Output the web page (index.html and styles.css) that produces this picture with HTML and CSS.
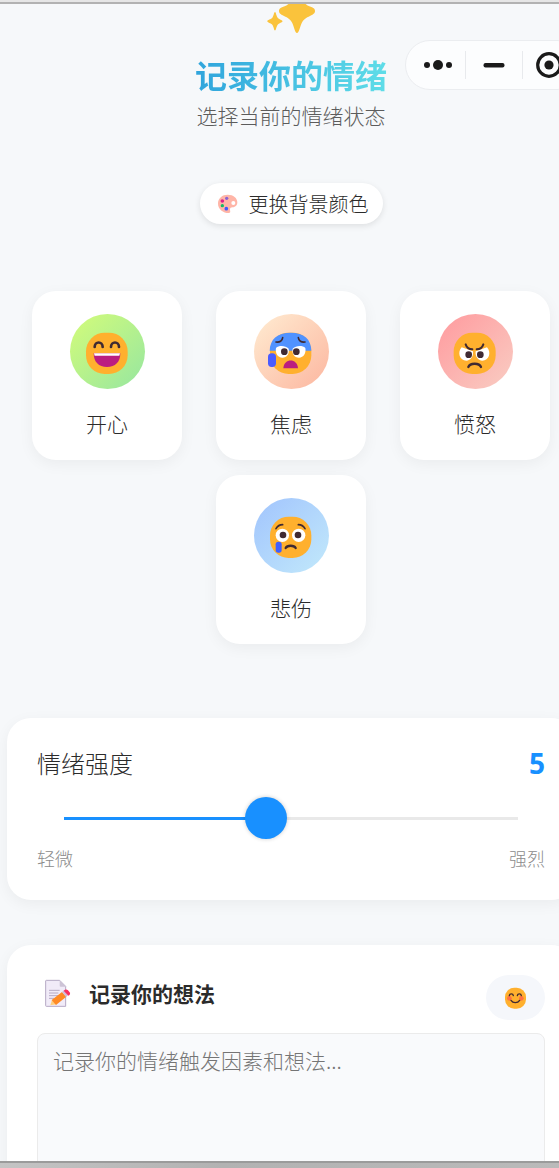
FILE: index.html
```html
<!DOCTYPE html>
<html lang="zh-CN">
<head>
<meta charset="utf-8">
<meta name="viewport" content="width=device-width, initial-scale=1">
<title>记录你的情绪</title>
<link rel="stylesheet" href="styles.css">
</head>
<body>
<div class="edge edge-top"></div>
<main class="viewport">
  <div class="page">
    <nav class="capsule" aria-label="小程序菜单">
      <button class="capsule-btn" type="button" aria-label="更多">
        <svg width="28" height="12" viewBox="0 0 28 12" fill="#1a1a1a"><circle cx="3" cy="6" r="3"/><circle cx="14" cy="6" r="5"/><circle cx="25" cy="6" r="3"/></svg>
      </button>
      <button class="capsule-btn" type="button" aria-label="最小化">
        <svg width="22" height="6" viewBox="0 0 22 6"><rect x="0.5" y="1" width="21" height="4.6" rx="2" fill="#1a1a1a"/></svg>
      </button>
      <button class="capsule-btn" type="button" aria-label="关闭">
        <svg width="26" height="26" viewBox="0 0 26 26"><circle cx="13" cy="13" r="11.3" fill="none" stroke="#1a1a1a" stroke-width="3.2"/><circle cx="13" cy="13" r="4.6" fill="#1a1a1a"/></svg>
      </button>
    </nav>

    <header class="hero">
      <svg class="sparkle" width="48" height="29" viewBox="0 0 48 29" fill="#fac33c" aria-hidden="true">
        <path d="M30-14c2 0 2 3 5 9 2 4 4 6 8 7.500 4 1.500 5 2.500 5 4.500s-1 3-5 5c-4 2-6 3-8 6.500-2 4-3 10.500-5 10.500s-3-6.500-5-10.500c-2-3.500-4-4.500-8-6.500s-5-3-5-5 1-3 5-4.500c4-1.500 6-3.500 8-7.500 3-6 3-9 5-9z"/>
        <path d="M8 8c1 0 1 3 2.500 5.500C12 15.500 15.500 16 15.500 17.200S12 19 10.500 21C9 23.500 9 26.500 8 26.500S7 23.500 5.500 21C4 19 .3 18.500.3 17.200S4 15.500 5.500 13.500C7 11 7 8 8 8z"/>
      </svg>
      <h1 class="title">记录你的情绪</h1>
      <p class="subtitle">选择当前的情绪状态</p>
      <button class="theme-btn" type="button">
        <svg width="20" height="20" viewBox="87 75 60 60" aria-hidden="true">
          <path d="M116 77c17 0 29 10 29 23 0 8-5 15-14 15-6 0-8 2-8 6 0 5 3 11-3 11-18 0-33-12-33-28 0-17 13-27 29-27z" fill="#ffb5a7"/>
          <circle cx="133" cy="102" r="6" fill="#fff"/>
          <circle cx="100" cy="96" r="5.500" fill="#e0218a"/><circle cx="113" cy="88" r="5" fill="#8a63d2"/>
          <circle cx="100" cy="110" r="5" fill="#14b866"/><circle cx="112" cy="119" r="5.500" fill="#3d5afe"/>
        </svg>
        <span>更换背景颜色</span>
      </button>
    </header>

    <section class="moods" aria-label="情绪">
      <button class="mood" type="button">
        <span class="mood-icon happy">
          <svg width="48" height="48" viewBox="189 148 144 144" aria-hidden="true">
            <rect x="198" y="159" width="125" height="124" rx="56" fill="#ffb02e"/>
            <path d="M224 202c0-18 24-18 24 0M273 202c0-18 24-18 24 0" fill="none" stroke="#402a32" stroke-width="8" stroke-linecap="round"/>
            <path d="M221 221h80c0 26-15 41-40 41s-40-15-40-41z" fill="#bb1d80"/>
            <path d="M222 221h78l-2 7h-74z" fill="#fff"/>
          </svg>
        </span>
        <span class="mood-name">开心</span>
      </button>
      <button class="mood" type="button">
        <span class="mood-icon anxious">
          <svg width="48" height="48" viewBox="187 148 144 144" aria-hidden="true">
            <rect x="196" y="159" width="124" height="124" rx="56" fill="#ffb02e"/>
            <path d="M195 213c1-34 22-54 63-54s61 20 62 54z" fill="#5092ff"/>
            <path d="M214 205c8-8 28-8 38 2 3 14-5 27-19 27s-22-14-19-29zM302 205c-8-8-28-8-38 2-3 14 5 27 19 27s22-14 19-29z" fill="#fff"/>
            <circle cx="239" cy="216" r="10" fill="#402a32"/><circle cx="275" cy="216" r="10" fill="#402a32"/>
            <path d="M214 187c11 2 19-4 20-13M301 187c-11 2-19-4-20-13" fill="none" stroke="#402a32" stroke-width="5" stroke-linecap="round"/>
            <path d="M236 266c2-31 42-31 44 0z" fill="#bb1d80"/>
            <rect x="190" y="221" width="24" height="41" rx="11" fill="#4a5cff"/>
          </svg>
        </span>
        <span class="mood-name">焦虑</span>
      </button>
      <button class="mood" type="button">
        <span class="mood-icon angry">
          <svg width="48" height="48" viewBox="199 148 144 144" aria-hidden="true">
            <rect x="207" y="159" width="126" height="124" rx="56" fill="#ffb02e"/>
            <path d="M231 203l34 12c2 15-7 28-20 28-20 0-28-24-14-40zM307 203l-34 12c-2 15 7 28 20 28 20 0 28-24 14-40z" fill="#fff"/>
            <circle cx="252" cy="225" r="10" fill="#402a32"/><circle cx="287" cy="225" r="10" fill="#402a32"/>
            <path d="M243 194c3 9 10 15 20 15M296 194c-3 9-10 15-20 15" fill="none" stroke="#402a32" stroke-width="6" stroke-linecap="round"/>
            <path d="M251 262c5-13 33-13 38 0" fill="none" stroke="#402a32" stroke-width="7" stroke-linecap="round"/>
          </svg>
        </span>
        <span class="mood-name">愤怒</span>
      </button>
      <button class="mood" type="button">
        <span class="mood-icon sad">
          <svg width="48" height="48" viewBox="187 145 144 144" aria-hidden="true">
            <rect x="196" y="156" width="124" height="124" rx="56" fill="#ffb02e"/>
            <circle cx="233" cy="212" r="20" fill="#fff"/><circle cx="282" cy="212" r="20" fill="#fff"/>
            <circle cx="235" cy="211" r="10" fill="#402a32"/><circle cx="280" cy="211" r="10" fill="#402a32"/>
            <path d="M214 192c4-7 11-12 20-12M301 192c-4-7-11-12-20-12" fill="none" stroke="#402a32" stroke-width="5" stroke-linecap="round"/>
            <path d="M243 250c5-9 25-9 30 0" fill="none" stroke="#402a32" stroke-width="7" stroke-linecap="round"/>
            <rect x="213" y="231" width="18" height="33" rx="8" fill="#3f5fff"/>
          </svg>
        </span>
        <span class="mood-name">悲伤</span>
      </button>
    </section>

    <section class="card strength">
      <div class="strength-head">
        <label for="strength">情绪强度</label>
        <output class="strength-value" for="strength">5</output>
      </div>
      <input class="slider" id="strength" type="range" min="1" max="10" value="5">
      <div class="strength-scale"><span>轻微</span><span>强烈</span></div>
    </section>

    <section class="card note">
      <div class="note-head">
        <label class="note-title" for="note">
          <svg width="27" height="28" viewBox="132 135 81 84" aria-hidden="true">
            <path d="M139 139h40l18 18v60h-58q-2 0-2-2v-74q0-2 2-2z" fill="#f1ebf8" stroke="#b5a9c4" stroke-width="3"/>
            <path d="M179 139v16q0 3 3 3h15z" fill="#cdc4d6"/>
            <path d="M147 169h32M147 177h28M147 185h28M147 193h15" stroke="#b5a9c4" stroke-width="3"/>
            <path d="M151 214l5-17 14 14z" fill="#ffce7c"/>
            <path d="M155 198l31-24 13 14-31 25z" fill="#ff8a24"/>
            <path d="M186 174l6-5 12 15-6 5z" fill="#d3bdd9"/>
            <path d="M191 170c5-4 9-4 13-1l6 7c1 4-1 7-5 9z" fill="#f92f60"/>
          </svg>
          <span>记录你的想法</span>
        </label>
        <button class="emoji-btn" type="button" aria-label="插入表情">
          <svg width="23" height="23" viewBox="312 154 69 69" aria-hidden="true">
            <rect x="315" y="159" width="63" height="63" rx="28" fill="#ffb02e"/>
            <circle cx="328" cy="191" r="7" fill="#ff7043"/><circle cx="364" cy="191" r="7" fill="#ff7043"/>
            <path d="M328 183c1-7 11-7 12 0M352 183c1-7 11-7 12 0M333 197c6 9 20 9 26 0" fill="none" stroke="#402a32" stroke-width="4" stroke-linecap="round"/>
          </svg>
        </button>
      </div>
      <textarea class="note-input" id="note" placeholder="记录你的情绪触发因素和想法..."></textarea>
    </section>
  </div>
</main>
<div class="edge edge-bottom"></div>
</body>
</html>
```
FILE: styles.css
```css
* {
  box-sizing: border-box;
}

body {
  display: flex;
  flex-direction: column;
  height: 100vh;
  margin: 0;
  overflow: hidden;
  background: #f6f8fa;
  color: #2b2b2b;
  font-family: "Noto Sans CJK SC", sans-serif;
  font-weight: 300;
}

button {
  border: 0;
  padding: 0;
  color: inherit;
  font: inherit;
  cursor: pointer;
}

svg {
  display: block;
  flex: none;
}

.edge {
  flex: none;
}

.edge-top {
  height: 4px;
  background: #e6e6e6;
  border-bottom: 2px solid #b2b2b2;
}

.edge-bottom {
  height: 7px;
  background: linear-gradient(90deg, #c4c4c4, #b2b2b2 40%, #bababa);
  border-top: 2px solid #9b9b9b;
}

.viewport {
  flex: 1;
  min-height: 0;
  overflow: hidden;
}

/* The page is slightly wider than the window and runs off its right side. */
.page {
  position: relative;
  width: calc(100% + 23px);
  padding: 0 7px;
}

.capsule {
  position: absolute;
  top: 36px;
  right: 0;
  display: flex;
  align-items: center;
  height: 50px;
  padding: 0 2px;
  border: 1px solid #ebedf0;
  border-radius: 25px;
  background: #fcfdfe;
}

.capsule-btn {
  display: flex;
  align-items: center;
  justify-content: center;
  width: 57px;
  height: 28px;
  background: none;
}

.capsule-btn:first-child {
  padding-left: 2px;
}

.capsule-btn:last-child {
  padding-right: 4px;
}

.capsule-btn + .capsule-btn {
  border-left: 1px solid #e8eaed;
}

.hero {
  display: flex;
  flex-direction: column;
  align-items: center;
}

.title {
  margin: 19px 0 0;
  background: linear-gradient(90deg, #2fa4dc, #5fdde8);
  background-clip: text;
  color: transparent;
  font-size: 32px;
  font-weight: 700;
  line-height: 44px;
}

.subtitle {
  margin: 4px 0 0;
  color: #5c5c5c;
  font-size: 21px;
  line-height: 30px;
}

.theme-btn {
  display: flex;
  align-items: center;
  gap: 11px;
  height: 41px;
  margin-top: 53px;
  padding: 0 14px 0 18px;
  border-radius: 21px;
  background: #fff;
  box-shadow: 0 2px 6px rgba(0, 0, 0, 0.1);
  font-size: 20px;
}

.moods {
  display: flex;
  flex-wrap: wrap;
  justify-content: center;
  gap: 15px 34px;
  margin-top: 67px;
}

.mood {
  display: flex;
  flex-direction: column;
  align-items: center;
  gap: 19px;
  width: 150px;
  padding: 23px 0 22px;
  border-radius: 24px;
  background: #fff;
  box-shadow: 0 4px 15px rgba(0, 0, 0, 0.05);
  font-size: 21px;
  line-height: 30px;
}

.mood-icon {
  display: flex;
  align-items: center;
  justify-content: center;
  width: 75px;
  height: 75px;
  padding-top: 3px;
  border-radius: 50%;
}

.happy {
  background: linear-gradient(135deg, #d4fc79, #96e6a1);
}

.anxious {
  background: linear-gradient(135deg, #ffecd2, #fcb69f);
}

.angry {
  background: linear-gradient(135deg, #ff9a9e, #f9cdc3);
}

.sad {
  background: linear-gradient(135deg, #a1c4fd, #c2e9fb);
}

.card {
  border-radius: 24px;
  background: #fff;
  box-shadow: 0 4px 15px rgba(0, 0, 0, 0.05);
}

.strength {
  margin-top: 74px;
  padding: 29px 30px;
}

.strength-head,
.strength-scale,
.note-head {
  display: flex;
  justify-content: space-between;
}

.strength-head {
  font-size: 24px;
  line-height: 32px;
}

.strength-value {
  color: #1890ff;
  font-family: "Noto Sans", sans-serif;
  font-size: 28px;
  font-weight: 700;
}

.slider {
  display: block;
  width: calc(100% - 12px);
  height: 42px;
  margin: 18px 6px 0;
  appearance: none;
  background: none;
}

.slider::-webkit-slider-runnable-track {
  height: 3px;
  background: linear-gradient(90deg, transparent 21px, #1890ff 21px 45%, #e9e9e9 45% calc(100% - 21px), transparent calc(100% - 21px));
}

.slider::-webkit-slider-thumb {
  width: 42px;
  height: 42px;
  margin-top: -20px;
  appearance: none;
  border-radius: 50%;
  background: #1890ff;
  box-shadow: 0 0 4px rgba(0, 0, 0, 0.2);
}

.strength-scale {
  margin-top: 6px;
  color: #8c8c8c;
  font-size: 18px;
  line-height: 26px;
}

.note {
  margin-top: 45px;
  padding: 30px;
}

.note-title {
  display: flex;
  align-items: center;
  gap: 18px;
  height: 36px;
  padding-left: 7px;
  font-size: 21px;
  font-weight: 700;
}

.emoji-btn {
  display: flex;
  align-items: center;
  justify-content: center;
  width: 59px;
  height: 45px;
  border-radius: 23px;
  background: #f5f7fb;
}

.note-input {
  display: block;
  width: 100%;
  height: 240px;
  margin-top: 13px;
  padding: 11px 15px;
  border: 1px solid #ebebeb;
  border-radius: 8px;
  background: #f9fafc;
  color: #333;
  font: inherit;
  font-size: 21px;
  line-height: 30px;
  resize: none;
}

.note-input::placeholder {
  color: #757575;
}
```
